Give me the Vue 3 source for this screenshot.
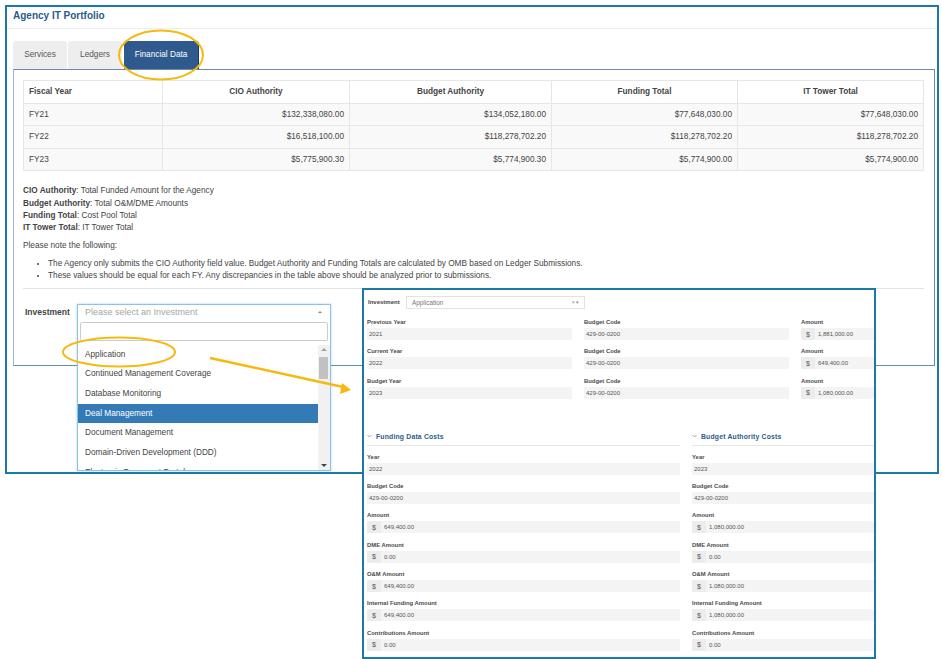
<script setup>
const fiscalRows = [
  { year: 'FY21', cio: '$132,338,080.00', budget: '$134,052,180.00', funding: '$77,648,030.00', tower: '$77,648,030.00' },
  { year: 'FY22', cio: '$16,518,100.00', budget: '$118,278,702.20', funding: '$118,278,702.20', tower: '$118,278,702.20' },
  { year: 'FY23', cio: '$5,775,900.30', budget: '$5,774,900.30', funding: '$5,774,900.00', tower: '$5,774,900.00' },
]

const legend = [
  { term: 'CIO Authority', text: 'Total Funded Amount for the Agency' },
  { term: 'Budget Authority', text: 'Total O&M/DME Amounts' },
  { term: 'Funding Total', text: 'Cost Pool Total' },
  { term: 'IT Tower Total', text: 'IT Tower Total' },
]

const investments = [
  'Application',
  'Continued Management Coverage',
  'Database Monitoring',
  'Deal Management',
  'Document Management',
  'Domain-Driven Development (DDD)',
  'Electronic Document Portal',
]

const yearRows = [
  { label: 'Previous Year', year: '2021', amount: '1,881,000.00' },
  { label: 'Current Year', year: '2022', amount: '649,400.00' },
  { label: 'Budget Year', year: '2023', amount: '1,080,000.00' },
]

const costSections = [
  {
    title: 'Funding Data Costs',
    year: '2022',
    amounts: [
      ['Amount', '649,400.00'],
      ['DME Amount', '0.00'],
      ['O&M Amount', '649,400.00'],
      ['Internal Funding Amount', '649,400.00'],
      ['Contributions Amount', '0.00'],
    ],
  },
  {
    title: 'Budget Authority Costs',
    year: '2023',
    amounts: [
      ['Amount', '1,080,000.00'],
      ['DME Amount', '0.00'],
      ['O&M Amount', '1,080,000.00'],
      ['Internal Funding Amount', '1,080,000.00'],
      ['Contributions Amount', '0.00'],
    ],
  },
]
</script>

<template>
  <div class="page">
    <div class="window">
      <div class="window-title">Agency IT Portfolio</div>
      <div class="tabs">
        <div class="tab">Services</div>
        <div class="tab">Ledgers</div>
        <div class="tab active">Financial Data</div>
      </div>
      <div class="panel">
        <table class="fiscal">
          <thead>
            <tr>
              <th class="first">Fiscal Year</th>
              <th>CIO Authority</th>
              <th>Budget Authority</th>
              <th>Funding Total</th>
              <th>IT Tower Total</th>
            </tr>
          </thead>
          <tbody>
            <tr v-for="row in fiscalRows" :key="row.year">
              <td class="first">{{ row.year }}</td>
              <td>{{ row.cio }}</td>
              <td>{{ row.budget }}</td>
              <td>{{ row.funding }}</td>
              <td>{{ row.tower }}</td>
            </tr>
          </tbody>
        </table>

        <div class="legend">
          <div v-for="item in legend" :key="item.term"><b>{{ item.term }}</b>: {{ item.text }}</div>
        </div>
        <p class="note">Please note the following:</p>
        <ul class="bullets">
          <li>The Agency only submits the CIO Authority field value. Budget Authority and Funding Totals are calculated by OMB based on Ledger Submissions.</li>
          <li>These values should be equal for each FY. Any discrepancies in the table above should be analyzed prior to submissions.</li>
        </ul>
        <hr class="rule" />

        <div class="investment">
          <label>Investment</label>
          <div class="select">
            <div class="select-head">
              <span>Please select an Investment</span>
              <i class="caret-up"></i>
            </div>
            <div class="dropdown">
              <div class="search"><div class="search-box"></div></div>
              <div class="list">
                <div class="options">
                  <div
                    v-for="name in investments"
                    :key="name"
                    class="option"
                    :class="{ selected: name === 'Deal Management' }"
                  >{{ name }}</div>
                </div>
                <div class="scrollbar">
                  <i class="arrow-up"></i>
                  <div class="thumb"></div>
                  <i class="arrow-down"></i>
                </div>
              </div>
            </div>
          </div>
        </div>
      </div>
    </div>

    <div class="detail">
      <div class="detail-top">
        <b>Investment</b>
        <div class="mini-select">
          <span>Application</span>
          <span class="mini-icons">× ▾</span>
        </div>
      </div>

      <div class="year-grid">
        <template v-for="row in yearRows" :key="row.label">
          <div class="field">
            <label>{{ row.label }}</label>
            <div class="value">{{ row.year }}</div>
          </div>
          <div class="field">
            <label>Budget Code</label>
            <div class="value">429-00-0200</div>
          </div>
          <div class="field">
            <label>Amount</label>
            <div class="value money"><span class="addon">$</span>{{ row.amount }}</div>
          </div>
        </template>
      </div>

      <div class="cost-grid">
        <section v-for="section in costSections" :key="section.title">
          <h4>
            <svg width="5" height="4" viewBox="0 0 5 4"><path d="M0.5 1 L2.5 3 L4.5 1" fill="none" stroke="#7d8da0" stroke-width="0.8" /></svg>
            {{ section.title }}
          </h4>
          <div class="field">
            <label>Year</label>
            <div class="value">{{ section.year }}</div>
          </div>
          <div class="field">
            <label>Budget Code</label>
            <div class="value">429-00-0200</div>
          </div>
          <div v-for="item in section.amounts" :key="item[0]" class="field">
            <label>{{ item[0] }}</label>
            <div class="value money"><span class="addon">$</span>{{ item[1] }}</div>
          </div>
        </section>
      </div>
    </div>

    <svg class="callouts" width="942" height="659" viewBox="0 0 942 659">
      <ellipse cx="161" cy="55" rx="42" ry="24.5" fill="none" stroke="#f6b90f" stroke-width="2" />
      <ellipse cx="119" cy="352" rx="56" ry="14.5" fill="none" stroke="#f6b90f" stroke-width="2" />
      <path d="M210 358 L343 387" fill="none" stroke="#f6b90f" stroke-width="2.5" />
      <path d="M351 390 L340 394 L342 383 Z" fill="#f6b90f" />
    </svg>
  </div>
</template>

<style>
body {
  background: #fff;
}
</style>

<style scoped>
.page {
  position: relative;
  width: 942px;
  height: 659px;
  padding-top: 5px;
  box-sizing: border-box;
  overflow: hidden;
  font-family: "Liberation Sans", Arial, sans-serif;
  font-size: 8.25px;
  color: #444;
}

.window {
  box-sizing: border-box;
  width: 934px;
  height: 469px;
  margin-left: 5px;
  border: 2px solid #1a7aa3;
}

.window-title {
  height: 21px;
  padding-left: 6px;
  line-height: 18px;
  font-size: 10px;
  font-weight: bold;
  color: #2d5a8c;
  border-bottom: 1px solid #eee;
}

.tabs {
  display: flex;
  gap: 1px;
  margin-top: 12px;
  padding-left: 6px;
}

.tab {
  box-sizing: border-box;
  width: 54px;
  height: 28px;
  line-height: 27px;
  text-align: center;
  background: #eee;
  color: #555;
  border-radius: 3px 3px 0 0;
}

.tab:nth-child(2) {
  margin-right: 1px;
}

.tab.active {
  width: 75px;
  background: #2e5a8e;
  color: #fff;
  border-right: 1px solid #1d3a5c;
}

.panel {
  box-sizing: border-box;
  width: 922px;
  height: 297px;
  margin-left: 6px;
  padding: 10px 10px 0 9px;
  border: 1px solid #5f8fb0;
  border-top-color: #6f8aa5;
  border-left: 1px solid #9fb6cd;
}

.fiscal {
  width: 901px;
  border-collapse: collapse;
  table-layout: fixed;
}

.fiscal th,
.fiscal td {
  box-sizing: border-box;
  border: 1px solid #e6e6e6;
  padding: 0 5px;
  height: 22.6px;
}

.fiscal th {
  text-align: center;
  font-weight: bold;
}

.fiscal td {
  text-align: right;
  background: #f9f9f9;
}

.fiscal th.first,
.fiscal td.first {
  width: 139px;
  text-align: left;
}

.fiscal th:nth-child(2) {
  width: 187px;
}

.fiscal th:nth-child(3) {
  width: 202px;
}

.fiscal th:nth-child(4) {
  width: 186px;
}

.legend {
  margin-top: 14px;
  line-height: 12.2px;
}

.note {
  margin: 6px 0 0;
  line-height: 12px;
}

.bullets {
  margin: 6px 0 0;
  padding-left: 25px;
  line-height: 12.2px;
}

.rule {
  height: 0;
  margin: 5px 0 0;
  border: 0;
  border-top: 1px solid #e4e4e4;
}

.investment {
  display: flex;
  margin-top: 15px;
}

.investment label {
  width: 54px;
  padding: 3px 0 0 2px;
  box-sizing: border-box;
  font-size: 8.5px;
  font-weight: bold;
}

.select {
  position: relative;
  width: 254px;
  box-sizing: border-box;
  border: 1px solid #8ec1ea;
  box-shadow: 0 0 2px rgba(102, 175, 233, 0.6);
  background: #fff;
  height: 167px;
  overflow: hidden;
  z-index: 1;
}

.select-head {
  display: flex;
  justify-content: space-between;
  align-items: center;
  height: 14px;
  padding: 0 8px 0 7px;
  font-size: 9px;
  color: #a5a5a5;
}

.caret-up {
  width: 0;
  height: 0;
  border: 2px solid transparent;
  border-top: 0;
  border-bottom: 2px solid #888;
}

.search {
  padding: 3px 2px 4px 2px;
}

.search-box {
  box-sizing: border-box;
  width: 248px;
  height: 19px;
  border: 1px solid #ccc;
  border-radius: 2px;
}

.list {
  display: flex;
  height: 127px;
  overflow: hidden;
}

.options {
  flex: 1;
}

.option {
  height: 19.7px;
  line-height: 20.5px;
  padding-left: 7px;
  color: #444;
  white-space: nowrap;
}

.option.selected {
  background: #337ab7;
  color: #fff;
}

.scrollbar {
  position: relative;
  width: 12px;
  background: #f1f1f1;
}

.arrow-up,
.arrow-down {
  position: absolute;
  left: 3px;
  width: 0;
  height: 0;
  border: 3px solid transparent;
}

.arrow-up {
  top: 3px;
  border-top: 0;
  border-bottom: 3px solid #a3a3a3;
}

.arrow-down {
  bottom: 5px;
  border-bottom: 0;
  border-top: 3px solid #444;
}

.thumb {
  position: absolute;
  top: 12px;
  left: 1px;
  width: 9px;
  height: 22px;
  background: #c1c1c1;
}

.detail {
  position: absolute;
  left: 362px;
  top: 288px;
  box-sizing: border-box;
  width: 514px;
  height: 371px;
  padding: 5px 0 0 3px;
  background: #fff;
  border: 2px solid #1a7aa3;
  overflow: hidden;
  color: #444;
  z-index: 2;
}

.detail-top {
  display: flex;
  align-items: center;
  height: 14px;
  padding-left: 1px;
  font-size: 6px;
}

.detail-top b {
  width: 38px;
  flex: none;
}

.mini-select {
  display: flex;
  justify-content: space-between;
  align-items: center;
  box-sizing: border-box;
  width: 179px;
  height: 13px;
  padding: 0 5px;
  border: 1px solid #e2e2e2;
  font-size: 6.4px;
  color: #777;
}

.mini-icons {
  font-size: 5px;
  color: #888;
}

.year-grid {
  display: grid;
  grid-template-columns: 205px 205px 1fr;
  column-gap: 12px;
  margin-top: 7px;
}

.cost-grid {
  display: grid;
  grid-template-columns: 313px 1fr;
  column-gap: 12px;
  margin-top: 26px;
}

.cost-grid h4 {
  display: flex;
  align-items: center;
  gap: 4px;
  height: 16px;
  margin: 0 0 5px;
  padding: 0 0 2px 0;
  box-sizing: border-box;
  font-size: 6.8px;
  color: #2d5a8c;
  letter-spacing: 0.2px;
  border-bottom: 1px solid #e6e6e6;
}

.field {
  height: 29.3px;
}

.field label {
  display: block;
  height: 12px;
  line-height: 13px;
  font-size: 5.9px;
  font-weight: bold;
  color: #4a4a4a;
}

.value {
  display: flex;
  align-items: center;
  height: 12px;
  padding-left: 2px;
  background: #f4f4f4;
  font-size: 6px;
  color: #555;
}

.value.money {
  padding-left: 0;
}

.addon {
  display: flex;
  align-items: center;
  justify-content: center;
  width: 14px;
  height: 100%;
  margin-right: 3px;
  background: #ececec;
  font-size: 7px;
  color: #555;
}

.callouts {
  position: absolute;
  left: 0;
  top: 0;
  z-index: 3;
  pointer-events: none;
}
</style>
